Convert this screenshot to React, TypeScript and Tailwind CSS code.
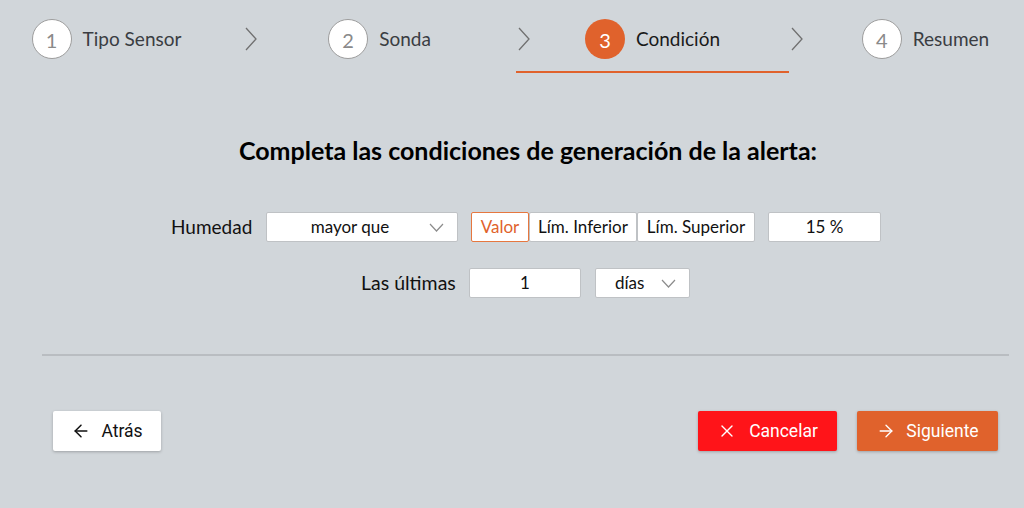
import React from 'react';
import { ArrowLeft, ArrowRight, X } from 'lucide-react';

const steps = [
  { n: 1, label: 'Tipo Sensor' },
  { n: 2, label: 'Sonda' },
  { n: 3, label: 'Condición' },
  { n: 4, label: 'Resumen' },
];

const ACTIVE = 3;

const StepChevron = () => (
  <svg className="absolute right-[-14px] top-[27px]" width="12" height="24" viewBox="0 0 12 24" fill="none">
    <polyline points="1,1 11,12 1,23" stroke="#707070" strokeWidth="1.3" />
  </svg>
);

const DropChevron = ({ className }: { className: string }) => (
  <svg className={className} width="15" height="9" viewBox="0 0 15 9" fill="none">
    <polyline points="1,1 7.5,8 14,1" stroke="#8c8c8c" strokeWidth="1.2" />
  </svg>
);

const Stepper = () => (
  <div className="overflow-hidden">
    <div className="flex ml-[-30px]">
      {steps.map((s, i) => {
        const active = s.n === ACTIVE;
        return (
          <div key={s.n} className="relative w-[273px] shrink-0 h-[74px]">
            <div className="flex items-center justify-center gap-[11px] pt-[19px]">
              <div
                className={
                  active
                    ? 'w-10 h-10 rounded-full bg-[#e0622c] text-white flex items-center justify-center text-[20px] pt-[2px]'
                    : 'w-10 h-10 rounded-full bg-white border border-[#9d9d9d] text-[#8a8a8a] flex items-center justify-center text-[20px] pt-[2px]'
                }
              >
                {s.n}
              </div>
              <span className={active ? 'text-[19px] text-[#1a1a1a]' : 'text-[19px] text-[#3a3d42]'}>{s.label}</span>
            </div>
            {active && <div className="absolute left-0 right-0 top-[71px] h-[2px] bg-[#e0622c]" />}
            {i < steps.length - 1 && <StepChevron />}
          </div>
        );
      })}
    </div>
  </div>
);

const Box = ({ className, children }: { className: string; children: React.ReactNode }) => (
  <div
    className={
      'h-[30px] bg-white border border-[#bfc2c5] rounded-[2px] flex items-center text-[17px] text-[#111] ' + className
    }
  >
    {children}
  </div>
);

export default function App() {
  return (
    <div className="w-[1024px] h-[508px] bg-[#d1d6da] font-['Lato','Noto_Sans',sans-serif]">
      <Stepper />

      <h1 className="text-center font-bold text-[25px] text-black mt-[60px] leading-[32px] pl-[32px]">
        Completa las condiciones de generación de la alerta:
      </h1>

      {/* row 1 */}
      <div className="flex items-center mt-[46px] pl-[171px]">
        <span className="text-[19px] text-[#111] w-[95px]">Humedad</span>
        <Box className="w-[192px] relative justify-center">
          <span className="mr-[24px]">mayor que</span>
          <DropChevron className="absolute right-[13px]" />
        </Box>
        <div className="flex ml-[13px]">
          <Box className="w-[58px] justify-center !border-[#e6773f] text-[#e0622c]">Valor</Box>
          <Box className="w-[108px] justify-center">Lím. Inferior</Box>
          <Box className="w-[118px] justify-center">Lím. Superior</Box>
        </div>
        <Box className="w-[113px] justify-center ml-[13px]">15 %</Box>
      </div>

      {/* row 2 */}
      <div className="flex items-center mt-[26px] pl-[361px]">
        <span className="text-[19.5px] text-[#111] w-[108px]">Las últimas</span>
        <Box className="w-[112px] justify-center">1</Box>
        <Box className="w-[95px] ml-[14px] relative pl-[19px]">
          <span>días</span>
          <DropChevron className="absolute right-[13px]" />
        </Box>
      </div>

      <div className="mx-[42px] mr-[15px] mt-[56px] h-[2px] bg-[#b9bdc1]" />

      {/* actions */}
      <div className="flex items-center mt-[55px] px-[53px] pr-[26px] font-['Roboto',sans-serif] text-[17.5px]">
        <button className="h-[40px] w-[108px] bg-white rounded-[2px] shadow-[0_1px_3px_rgba(0,0,0,0.25)] flex items-center justify-center gap-[10px] text-[#111]">
          <ArrowLeft size={20} strokeWidth={1.8} />
          Atrás
        </button>
        <div className="flex-1" />
        <button className="h-[40px] w-[139px] bg-[#ff1419] rounded-[2px] shadow-[0_1px_3px_rgba(0,0,0,0.25)] flex items-center justify-center gap-[12px] text-white">
          <X size={20} strokeWidth={1.6} />
          Cancelar
        </button>
        <button className="h-[40px] w-[141px] ml-[20px] bg-[#e0622c] rounded-[2px] shadow-[0_1px_3px_rgba(0,0,0,0.25)] flex items-center justify-center gap-[10px] text-white">
          <ArrowRight size={20} strokeWidth={1.6} />
          Siguiente
        </button>
      </div>
    </div>
  );
}
